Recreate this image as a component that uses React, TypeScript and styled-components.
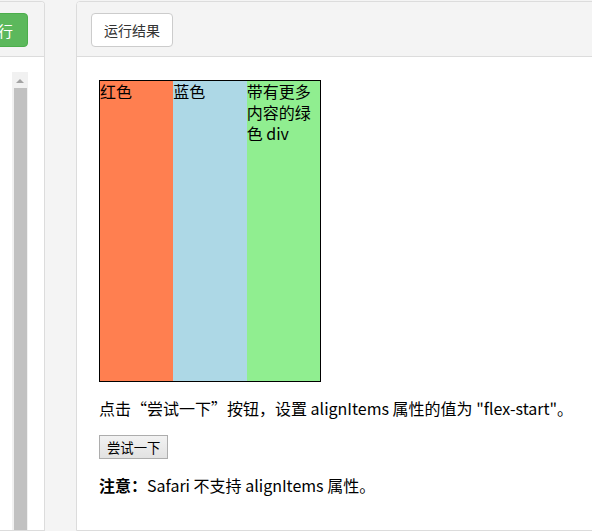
import styled, { createGlobalStyle } from "styled-components";

const GlobalStyle = createGlobalStyle`
  html, body {
    margin: 0;
    padding: 0;
    background: #f4f4f4;
    overflow: hidden;
  }
  body {
    font-family: "Noto Sans", "Noto Sans CJK SC", sans-serif;
  }
`;

const Page = styled.div`
  display: flex;
  gap: 31px;
  height: 531px;
  padding-top: 1px;
  box-sizing: border-box;
  overflow: hidden;
`;

const Panel = styled.section<{ $side: "left" | "right" }>`
  display: flex;
  flex-direction: column;
  flex-shrink: 0;
  box-sizing: border-box;
  width: ${(p) => (p.$side === "left" ? "45px" : "540px")};
  border: 1px solid #dcdcdc;
  border-left: ${(p) => (p.$side === "left" ? "none" : "1px solid #dcdcdc")};
  border-radius: ${(p) => (p.$side === "left" ? "0 4px 0 0" : "4px 0 0 0")};
  background: #fff;
  overflow: hidden;
`;

const PanelHeader = styled.div<{ $align: "start" | "end" }>`
  display: flex;
  align-items: center;
  justify-content: ${(p) => (p.$align === "end" ? "flex-end" : "flex-start")};
  height: 55px;
  flex-shrink: 0;
  box-sizing: border-box;
  padding: 0 16px 0 14px;
  background: #f4f4f4;
  border-bottom: 1px solid #dcdcdc;
`;

const RunButton = styled.button`
  flex-shrink: 0;
  height: 34px;
  padding: 0 14px;
  margin-top: 2px;
  border: 1px solid #4cae4c;
  border-radius: 4px;
  background: #5cb85c;
  color: #fff;
  font-family: "Noto Sans CJK SC", sans-serif;
  font-size: 15px;
`;

const ResultButton = styled.button`
  flex-shrink: 0;
  height: 34px;
  width: 82px;
  margin-top: 2px;
  padding: 0;
  border: 1px solid #ccc;
  border-radius: 4px;
  background: #fff;
  color: #333;
  font-family: "Noto Sans CJK SC", sans-serif;
  font-size: 14px;
`;

const EditorBody = styled.div`
  flex: 1;
  display: flex;
  justify-content: flex-end;
  padding: 15px 16px 0 0;
`;

const ScrollTrack = styled.div`
  width: 16px;
  height: 100%;
  background: #f1f1f1;
  display: flex;
  flex-direction: column;
  align-items: center;
`;

const ScrollArrow = styled.div`
  width: 0;
  height: 0;
  margin: 7px 0 5px;
  border-left: 4px solid transparent;
  border-right: 4px solid transparent;
  border-bottom: 4px solid #a3a3a3;
`;

const ScrollThumb = styled.div`
  width: 13px;
  flex: 1;
  margin-left: 1px;
  background: #c1c1c1;
`;

const Result = styled.div`
  flex: 1;
  padding: 23px 22px;
  font-family: "Noto Sans", "Noto Sans CJK SC", sans-serif;
  font-size: 16px;
  line-height: 21px;
  color: #000;
`;

const FlexBox = styled.div`
  display: flex;
  align-items: stretch;
  width: 220px;
  height: 300px;
  border: 1px solid #000;
`;

const Cell = styled.div<{ $bg: string }>`
  flex: 1;
  background: ${(p) => p.$bg};
  font-family: "Noto Sans CJK SC", sans-serif;
`;

const Text = styled.p`
  margin: 16px 0;
  white-space: nowrap;
  font-family: "Noto Sans CJK SC", sans-serif;
`;

const TryButton = styled.button`
  display: block;
  height: 24px;
  padding: 0 7px;
  border: 1px solid #adadad;
  border-radius: 0;
  background: linear-gradient(#f2f2f2, #e2e2e2);
  color: #000;
  font-family: "Noto Sans CJK SC", sans-serif;
  font-size: 13.33px;
`;

export default function App() {
  return (
    <Page>
      <GlobalStyle />
      <Panel $side="left">
        <PanelHeader $align="end">
          <RunButton>点击运行</RunButton>
        </PanelHeader>
        <EditorBody>
          <ScrollTrack>
            <ScrollArrow />
            <ScrollThumb />
          </ScrollTrack>
        </EditorBody>
      </Panel>
      <Panel $side="right">
        <PanelHeader $align="start">
          <ResultButton>运行结果</ResultButton>
        </PanelHeader>
        <Result>
          <FlexBox>
            <Cell $bg="coral">红色</Cell>
            <Cell $bg="lightblue">蓝色</Cell>
            <Cell $bg="lightgreen">带有更多内容的绿色 div</Cell>
          </FlexBox>
          <Text>
            点击“尝试一下”按钮，设置 alignItems 属性的值为 "flex-start"。
          </Text>
          <TryButton>尝试一下</TryButton>
          <Text>
            <b>注意：</b>Safari 不支持 alignItems 属性。
          </Text>
        </Result>
      </Panel>
    </Page>
  );
}
